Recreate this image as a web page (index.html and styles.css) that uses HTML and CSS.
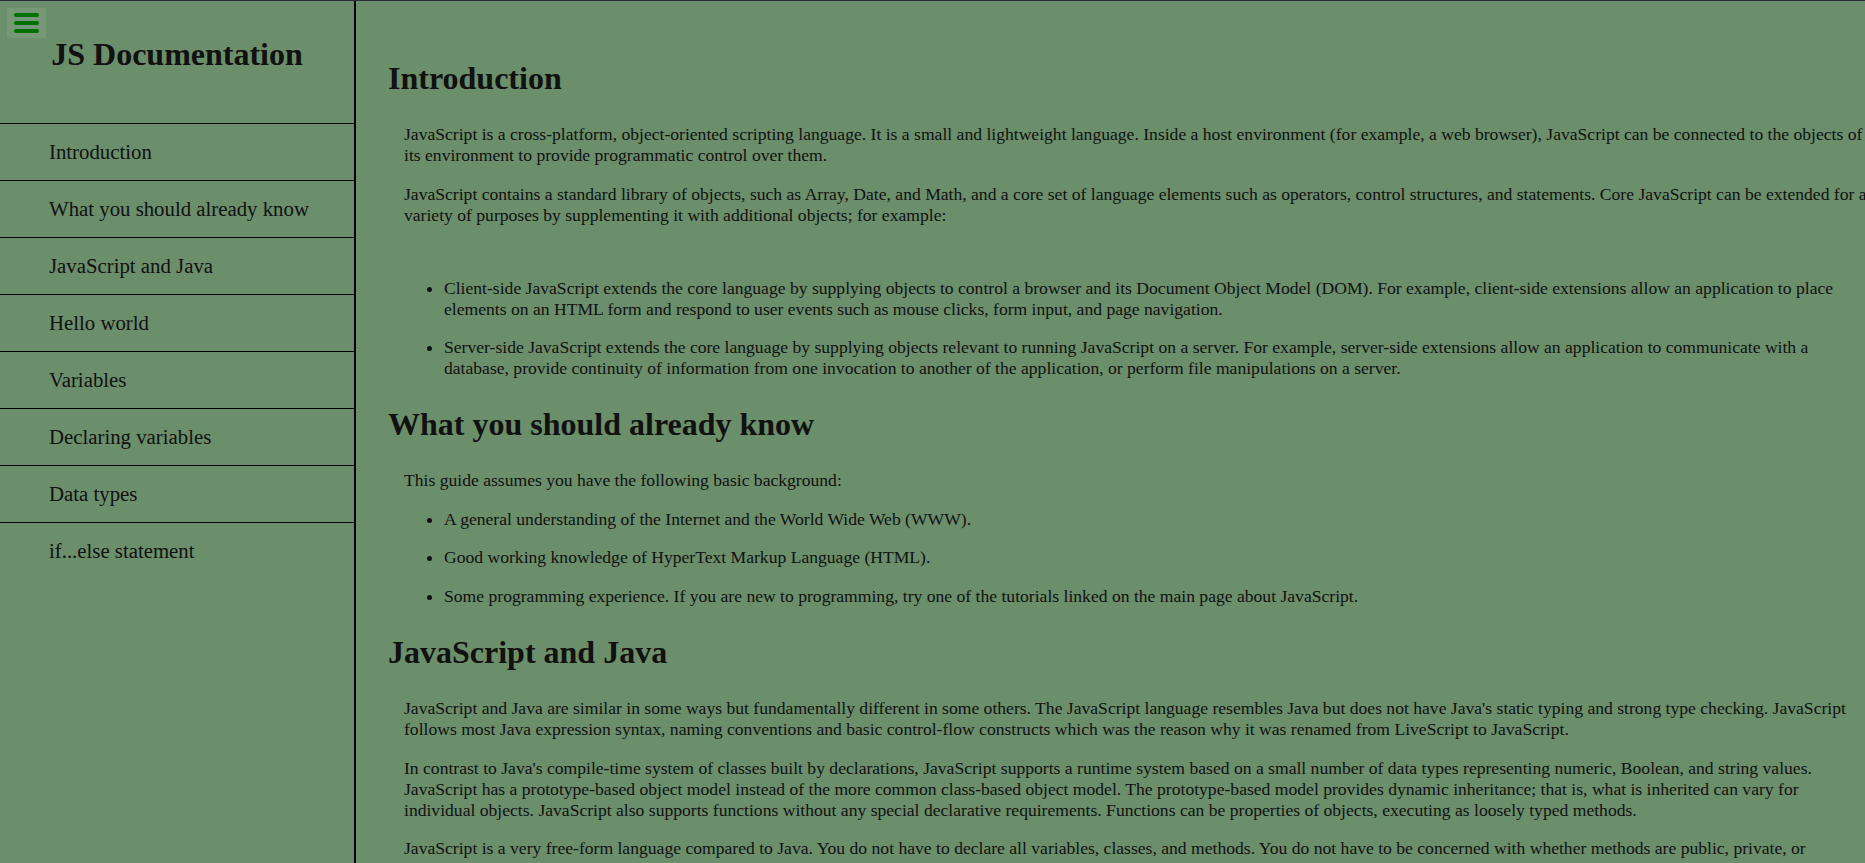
FILE: index.html
```html
<!DOCTYPE html>
<html lang="en">
<head>
<meta charset="utf-8">
<title>JS Documentation</title>
<link rel="stylesheet" href="styles.css">
</head>
<body>
<button class="menu-btn" aria-label="Menu">
  <svg width="25" height="20" viewBox="0 0 25 20">
    <rect x="0" y="0" width="25" height="4" rx="2" fill="#007000"/>
    <rect x="0" y="8" width="25" height="4" rx="2" fill="#007000"/>
    <rect x="0" y="16" width="25" height="4" rx="2" fill="#007000"/>
  </svg>
</button>
<div class="page">
  <nav class="sidebar" id="navbar">
    <header class="sidebar-header">
      <h1 class="site-title">JS Documentation</h1>
    </header>
    <ul class="nav-list">
      <li class="nav-item"><a class="nav-link" href="#Introduction">Introduction</a></li>
      <li class="nav-item"><a class="nav-link" href="#What_you_should_already_know">What you should already know</a></li>
      <li class="nav-item"><a class="nav-link" href="#JavaScript_and_Java">JavaScript and Java</a></li>
      <li class="nav-item"><a class="nav-link" href="#Hello_world">Hello world</a></li>
      <li class="nav-item"><a class="nav-link" href="#Variables">Variables</a></li>
      <li class="nav-item"><a class="nav-link" href="#Declaring_variables">Declaring variables</a></li>
      <li class="nav-item"><a class="nav-link" href="#Data_types">Data types</a></li>
      <li class="nav-item"><a class="nav-link" href="#if...else_statement">if...else statement</a></li>
    </ul>
  </nav>
  <main class="main" id="main-doc">
    <section class="main-section" id="Introduction">
      <header class="section-title">Introduction</header>
      <div class="section-body">
        <p>JavaScript is a cross-platform, object-oriented scripting language. It is a small and lightweight language. Inside a host environment (for example, a web browser), JavaScript can be connected to the objects of its environment to provide programmatic control over them.</p>
        <p>JavaScript contains a standard library of objects, such as Array, Date, and Math, and a core set of language elements such as operators, control structures, and statements. Core JavaScript can be extended for a variety of purposes by supplementing it with additional objects; for example:</p>
        <ul class="spaced-list gap-top">
          <li>Client-side JavaScript extends the core language by supplying objects to control a browser and its Document Object Model (DOM). For example, client-side extensions allow an application to place elements on an HTML form and respond to user events such as mouse clicks, form input, and page navigation.</li>
          <li>Server-side JavaScript extends the core language by supplying objects relevant to running JavaScript on a server. For example, server-side extensions allow an application to communicate with a database, provide continuity of information from one invocation to another of the application, or perform file manipulations on a server.</li>
        </ul>
      </div>
    </section>
    <section class="main-section" id="What_you_should_already_know">
      <header class="section-title">What you should already know</header>
      <div class="section-body">
        <p>This guide assumes you have the following basic background:</p>
        <ul class="spaced-list">
          <li>A general understanding of the Internet and the World Wide Web (WWW).</li>
          <li>Good working knowledge of HyperText Markup Language (HTML).</li>
          <li>Some programming experience. If you are new to programming, try one of the tutorials linked on the main page about JavaScript.</li>
        </ul>
      </div>
    </section>
    <section class="main-section" id="JavaScript_and_Java">
      <header class="section-title">JavaScript and Java</header>
      <div class="section-body">
        <p>JavaScript and Java are similar in some ways but fundamentally different in some others. The JavaScript language resembles Java but does not have Java's static typing and strong type checking. JavaScript follows most Java expression syntax, naming conventions and basic control-flow constructs which was the reason why it was renamed from LiveScript to JavaScript.</p>
        <p>In contrast to Java's compile-time system of classes built by declarations, JavaScript supports a runtime system based on a small number of data types representing numeric, Boolean, and string values. JavaScript has a prototype-based object model instead of the more common class-based object model. The prototype-based model provides dynamic inheritance; that is, what is inherited can vary for individual objects. JavaScript also supports functions without any special declarative requirements. Functions can be properties of objects, executing as loosely typed methods.</p>
        <p>JavaScript is a very free-form language compared to Java. You do not have to declare all variables, classes, and methods. You do not have to be concerned with whether methods are public, private, or protected, and you do not have to implement interfaces. Variables, parameters, and function return types are not explicitly typed.</p>
      </div>
    </section>
    <section class="main-section" id="Hello_world">
      <header class="section-title">Hello world</header>
      <div class="section-body">
        <p>To get started with writing JavaScript, open the Scratchpad and write your first "Hello world" JavaScript code:</p>
        <pre class="code">function greetMe(yourName) { alert("Hello " + yourName); }
greetMe("World");</pre>
      </div>
    </section>
  </main>
</div>
</body>
</html>
```

FILE: styles.css
```css
html, body {
  margin: 0;
  padding: 0;
}

body {
  background: #6b8e6b;
  color: #111;
  font-family: "Liberation Serif", "Times New Roman", serif;
  font-size: 16px;
  border-top: 1px solid #2a2b3a;
  overflow: hidden;
}

.menu-btn {
  position: absolute;
  top: 8px;
  left: 7px;
  width: 39px;
  height: 30px;
  padding: 0;
  border: none;
  background: #769876;
  display: flex;
  align-items: center;
  justify-content: center;
  cursor: pointer;
}

.menu-btn svg {
  display: block;
}

.page {
  display: flex;
  align-items: stretch;
  min-height: calc(100vh - 1px);
}

.sidebar {
  flex: 0 0 354px;
  width: 354px;
  border-right: 2px solid #000;
}

.sidebar-header {
  height: 87px;
  padding-top: 35px;
  border-bottom: 1px solid #000;
}

.site-title {
  margin: 0;
  text-align: center;
  font-size: 32px;
  font-weight: bold;
}

.nav-list {
  list-style: none;
  margin: 0;
  padding: 0;
}

.nav-item {
  border-bottom: 1px solid #000;
}

.nav-item:last-child {
  border-bottom: none;
}

.nav-link {
  display: block;
  padding: 16px 0 16px 49px;
  line-height: 24px;
  font-size: 20.8px;
  color: #111;
  text-decoration: none;
}

.main {
  flex: 0 0 auto;
  width: 1514px;
  box-sizing: border-box;
  padding: 32px 0 0 32px;
}

.section-title {
  display: block;
  font-size: 32px;
  font-weight: bold;
  margin: 27px 0 27px;
}

.section-body {
  padding-left: 16px;
  font-size: 17.6px;
}

.section-body p {
  margin: 17.6px 0;
}

.spaced-list {
  margin: 17.6px 0;
  padding-left: 40px;
}

.spaced-list li {
  margin: 17.6px 0;
}

.gap-top {
  margin-top: 52px;
}

.code {
  font-family: "Liberation Mono", monospace;
  font-size: 15px;
}
```
